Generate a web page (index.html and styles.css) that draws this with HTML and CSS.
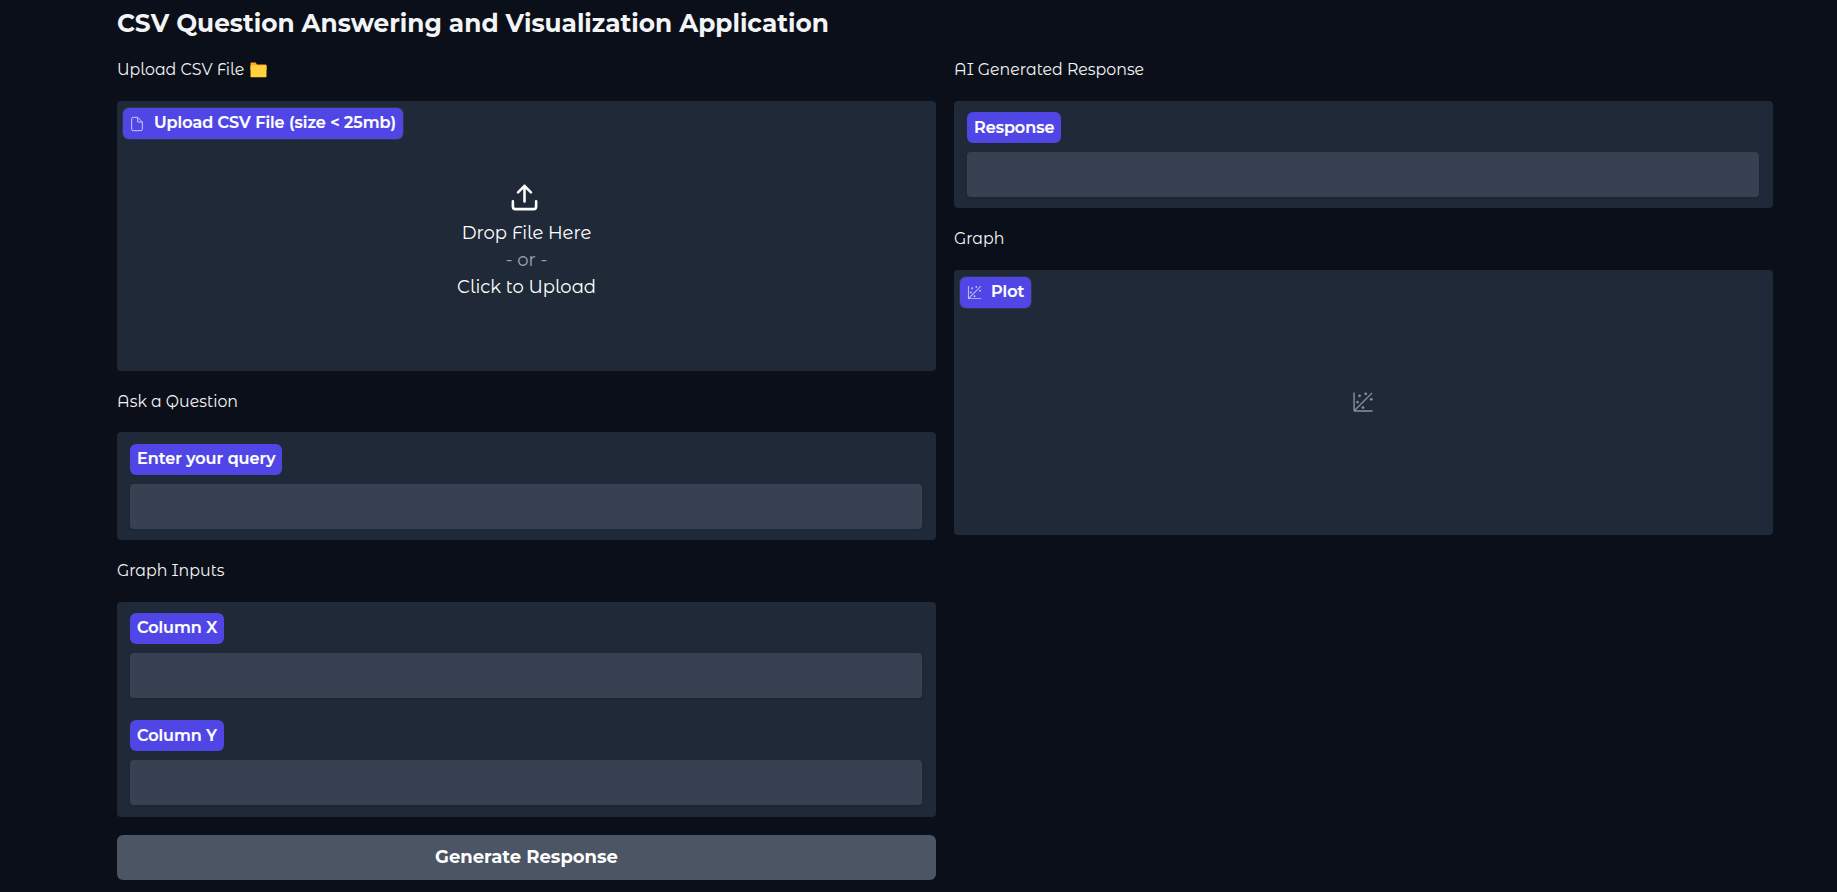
FILE: index.html
```
<!DOCTYPE html>
<html lang="en"><head><meta charset="utf-8"><title>CSV Question Answering</title><link rel="stylesheet" href="styles.css"></head>
<body>
<main class="app">
<h1 class="title">CSV Question Answering and Visualization Application</h1>
<div class="columns">
<section class="column">
<h2 class="heading"><span>Upload CSV File</span>
<svg class="folder" viewBox="0 0 17 16"><path fill="#ffa726" d="M1 .5h4.6l1.4 2h8.500q1 0 1 1V8H.5V1.500Q.5.5 1 .5z"/><rect x=".5" y="3.300" width="16" height="12" rx=".8" fill="#ffd23b"/></svg></h2>
<div class="panel upload">
<div class="label media"><svg class="ic file" viewBox="0 0 24 24"><path d="M13 2H6a2 2 0 0 0-2 2v16a2 2 0 0 0 2 2h12a2 2 0 0 0 2-2V9z"/><path d="M13 2v7h7"/></svg><span>Upload CSV File (size &lt; 25mb)</span></div>
<div class="drop">
<svg class="up" viewBox="0 0 24 24"><path d="M21 15v4a2 2 0 0 1-2 2H5a2 2 0 0 1-2-2v-4M17 8l-5-5-5 5M12 3v12"/></svg>
<span>Drop File Here</span><span class="or">- or -</span><span>Click to Upload</span>
</div></div>
<h2 class="heading ask">Ask a Question</h2>
<div class="panel query"><label class="label raised" for="q">Enter your query</label><input class="field" id="q"></div>
<h2 class="heading">Graph Inputs</h2>
<div class="panel inputs"><label class="label raised" for="x">Column X</label><input class="field" id="x">
<label class="label second" for="y">Column Y</label><input class="field" id="y"></div>
<button class="generate">Generate Response</button>
</section>
<section class="column">
<h2 class="heading">AI Generated Response</h2>
<div class="panel"><label class="label" for="r">Response</label><input class="field" id="r"></div>
<h2 class="heading">Graph</h2>
<div class="panel plot">
<div class="label media"><svg class="ic" viewBox="0 0 32 32"><g fill="currentColor"><circle cx="20" cy="4" r="2"/><circle cx="8" cy="16" r="2"/><circle cx="28" cy="12" r="2"/><circle cx="11" cy="7" r="2"/><circle cx="16" cy="24" r="2"/><path d="M30 3.413L28.586 2 4 26.585V2H2v26a2 2 0 0 0 2 2h26v-2H5.413z"/></g></svg><span>Plot</span></div>
<div class="empty"><svg class="big" viewBox="0 0 32 32"><g fill="currentColor"><circle cx="20" cy="4" r="2"/><circle cx="8" cy="16" r="2"/><circle cx="28" cy="12" r="2"/><circle cx="11" cy="7" r="2"/><circle cx="16" cy="24" r="2"/><path d="M30 3.413L28.586 2 4 26.585V2H2v26a2 2 0 0 0 2 2h26v-2H5.413z"/></g></svg></div>
</div>
</section>
</div></main>
</body></html>
```
FILE: styles.css
```
* { box-sizing: border-box; }
body { margin: 0; height: 892px; overflow: hidden; background: #0b0f19; color: #f3f4f6; font-family: Montserrat, Inter, sans-serif; font-size: 16px; }
.app { padding: 8px 64px 0 117px; }
.title { margin: 0; height: 54px; font-size: 24.8px; line-height: 30px; font-weight: 700; white-space: nowrap; }
.columns { display: grid; grid-template-columns: 819px 819px; gap: 18px; margin-top: -23px; }
.heading { display: flex; align-items: center; gap: 4px; margin: 0; height: 62px; padding-bottom: 2px; font-family: "Montserrat Alternates", Montserrat, sans-serif; font-size: 15.8px; font-weight: 400; white-space: nowrap; }
.ask { height: 61px; padding-bottom: 0; }
.folder { width: 17px; height: 16px; margin: 1px 0 0 2px; }
.panel { padding: 11px 14px 11px 13px; border-radius: 4px; background: #1f2937; }
.label { display: flex; align-items: center; width: fit-content; height: 31px; padding: 0 7px; border-radius: 6px; background: #4f46e5; color: #fff; font-size: 16px; font-weight: 600; white-space: nowrap; -webkit-text-stroke: .2px #fff; }
.raised { padding-bottom: 2px; }
.field { display: block; width: 100%; height: 45px; margin: 9px 0 0; border: 0; border-radius: 4px; background: #374151; box-shadow: 0 1px 3px #0000001a; }
.query { padding-top: 12px; }
.inputs { padding-bottom: 12px; }
.second { margin-top: 22px; }
.upload { height: 270px; padding: 7px 6px; }
.plot { height: 265px; padding: 7px 6px; }
.media { gap: 9px; padding-bottom: 2px; box-shadow: 0 0 0 1px #37415199; }
.ic { width: 15px; height: 15px; margin-top: 2px; color: #c9c7f8; }
.file { width: 16px; height: 16px; margin: 2px -1px 0 -1px; fill: none; stroke: currentColor; stroke-width: 1.500; }
.file + span { margin-left: 1px; }
.drop { display: flex; flex-direction: column; align-items: center; margin-top: 43px; font-family: "Montserrat Alternates", Montserrat, sans-serif; font-size: 18px; line-height: 27px; color: #fff; }
.up { width: 31px; height: 31px; margin: 0 5px 7px 0; fill: none; stroke: currentColor; stroke-width: 2; stroke-linecap: round; stroke-linejoin: round; }
.or { color: #9ca3af; }
.empty { display: flex; justify-content: center; padding: 83px 2px 0 0; color: #8b919b; }
.big { width: 22px; height: 22px; }
.generate { display: block; width: 100%; height: 45px; margin: 18px 0 0; padding: 0 0 2px; border: 0; border-radius: 6px; background: #4b5563; color: #fff; font: 700 18px Montserrat, Inter, sans-serif; }
```
